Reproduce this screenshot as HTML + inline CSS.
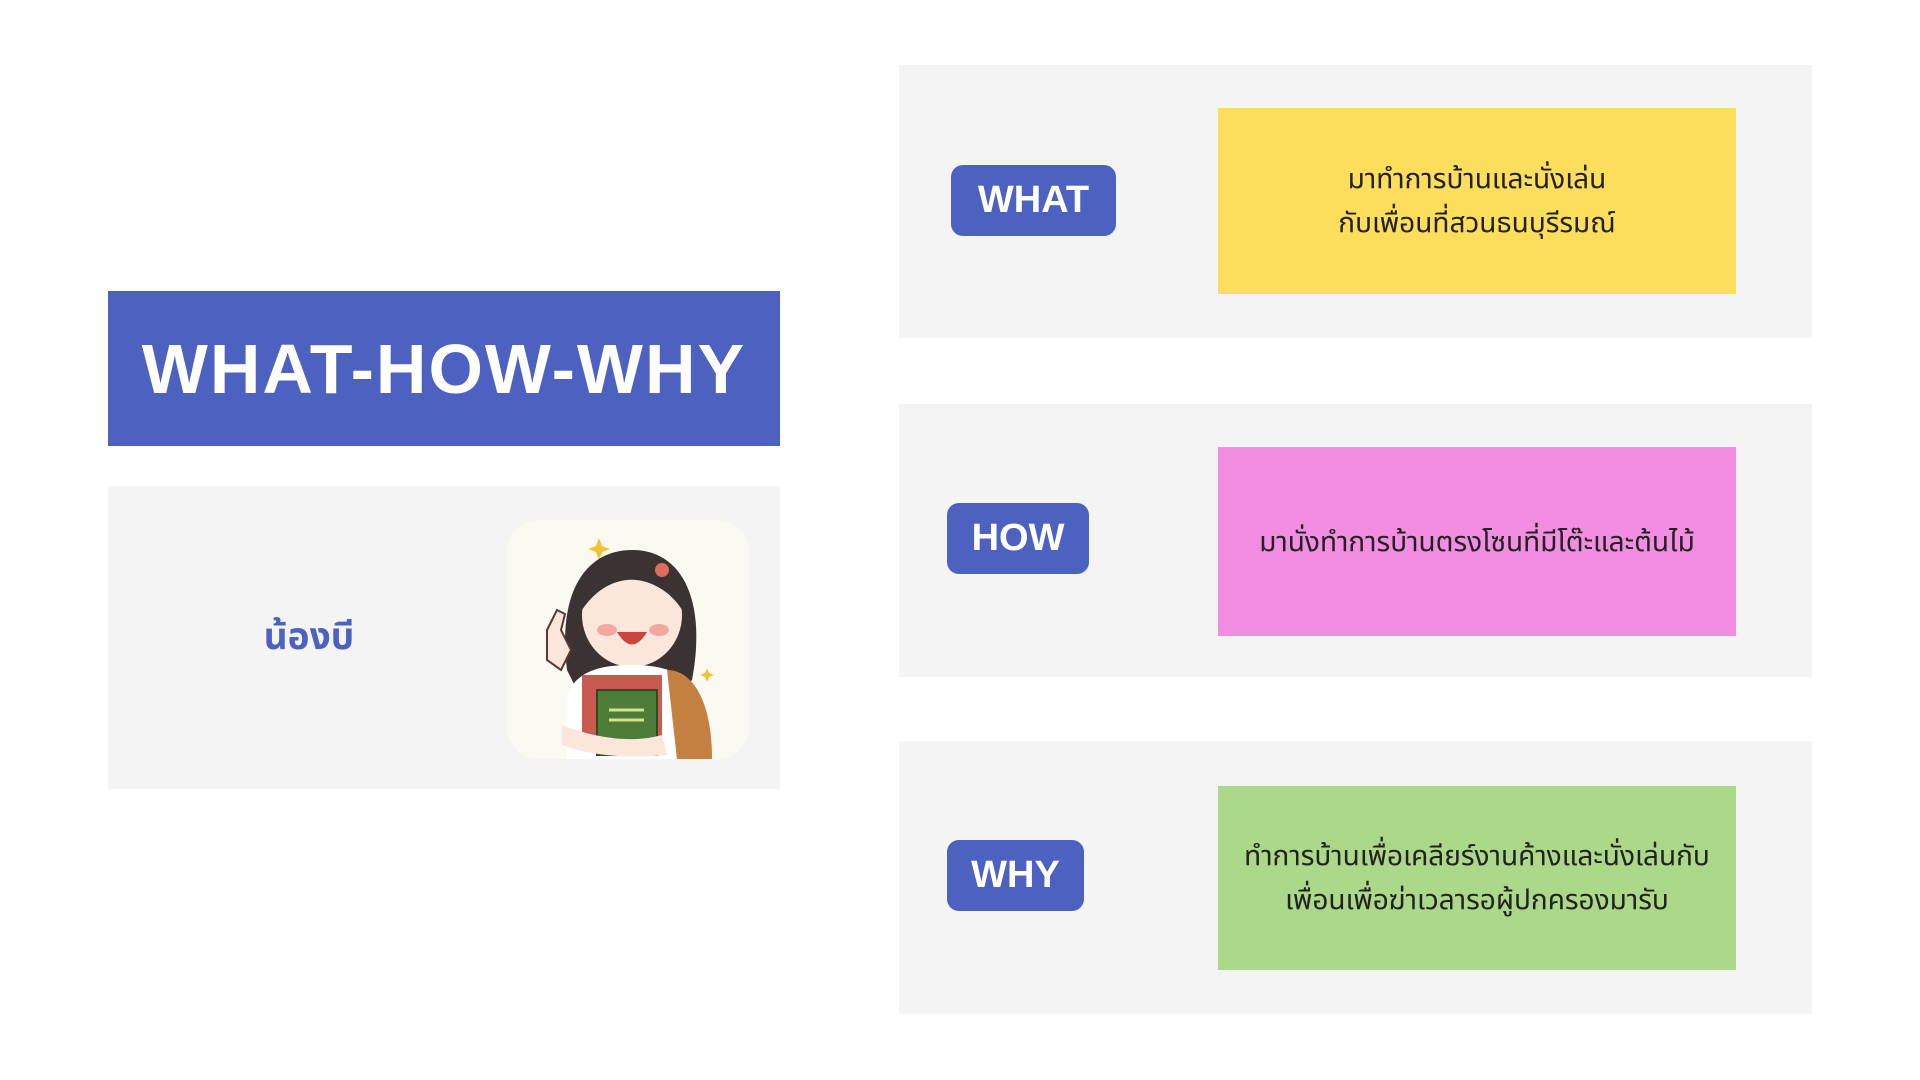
<!DOCTYPE html>
<html><head><meta charset="utf-8">
<style>
html,body{margin:0;padding:0;background:#fff;width:1920px;height:1080px;overflow:hidden;font-family:"Liberation Sans","Noto Sans Thai","Loma","Garuda",sans-serif;}
.abs{position:absolute;}
.title{left:108px;top:291px;width:672px;height:155px;background:#4c61c0;color:#fff;font-weight:bold;font-size:70px;display:flex;align-items:center;justify-content:center;letter-spacing:2px;}
.card{left:108px;top:486px;width:672px;height:303px;background:#f4f4f4;}
.name{left:200px;top:610px;width:218px;text-align:center;color:#4c61c0;font-weight:bold;font-size:37px;}
.img{left:507px;top:520px;width:242px;height:239px;border-radius:32px;background:#fafaf3;overflow:hidden;}
.panel{left:899px;width:913px;height:273px;background:#f4f4f4;}
.pill{background:#4c61c0;color:#fff;font-weight:bold;font-size:38px;border-radius:12px;display:flex;align-items:center;justify-content:center;}
.box{left:1218px;width:518px;display:flex;align-items:center;justify-content:center;text-align:center;font-size:28px;line-height:44px;color:#222;}
</style></head><body>
<div class="abs title">WHAT-HOW-WHY</div>
<div class="abs card"></div>
<div class="abs name">น้องบี</div>
<div class="abs img">
<svg width="242" height="239" viewBox="0 0 242 239">
 <path d="M92 18 l3 8 8 3 -8 3 -3 8 -3 -8 -8 -3 8 -3z" fill="#f2c230"/>
 <path d="M200 148 l2 5 5 2 -5 2 -2 5 -2 -5 -5 -2 5 -2z" fill="#f2c230"/>
 <path d="M60 150 C50 70 80 30 125 30 C175 30 200 80 185 160 L175 170 L70 170 Z" fill="#3a3331"/>
 <ellipse cx="125" cy="95" rx="50" ry="52" fill="#fbe6dc"/>
 <path d="M75 90 C80 50 110 40 130 42 C150 44 175 60 178 95 C165 70 140 58 120 60 C100 62 85 75 75 90Z" fill="#3a3331"/>
 <ellipse cx="100" cy="110" rx="10" ry="6" fill="#f4a7a0"/>
 <ellipse cx="152" cy="110" rx="10" ry="6" fill="#f4a7a0"/>
 <path d="M110 112 q15 25 30 0z" fill="#c8463e"/>
 <circle cx="155" cy="50" r="7" fill="#e06a5c"/>
 <path d="M40 110 l10 -20 8 4 -4 16 10 20 -10 20 -14 -10z" fill="#fbe6dc" stroke="#5a3a30" stroke-width="2"/>
 <path d="M60 175 C70 150 95 145 125 145 C160 145 185 155 190 180 L190 239 L60 239Z" fill="#fff"/>
 <path d="M160 150 C185 150 205 180 205 239 L170 239Z" fill="#c48040"/>
 <rect x="75" y="155" width="80" height="70" fill="#c95a50"/>
 <rect x="90" y="170" width="60" height="65" fill="#4e7d3a" stroke="#2e4a22" stroke-width="2"/>
 <path d="M102 190h35M102 200h35M110 222h25" stroke="#d8e08a" stroke-width="3"/>
 <path d="M55 205 C80 215 120 225 155 215 L160 235 C120 239 80 235 55 225Z" fill="#fbe6dc"/>
</svg>
</div>

<div class="abs panel" style="top:65px"></div>
<div class="abs panel" style="top:404px"></div>
<div class="abs panel" style="top:741px"></div>

<div class="abs pill" style="left:951px;top:165px;width:165px;height:71px">WHAT</div>
<div class="abs pill" style="left:947px;top:503px;width:142px;height:71px">HOW</div>
<div class="abs pill" style="left:947px;top:840px;width:137px;height:71px">WHY</div>

<div class="abs box" style="top:108px;height:186px;background:#fddd5c">มาทำการบ้านและนั่งเล่น<br>กับเพื่อนที่สวนธนบุรีรมณ์</div>
<div class="abs box" style="top:447px;height:189px;background:#f28de2">มานั่งทำการบ้านตรงโซนที่มีโต๊ะและต้นไม้</div>
<div class="abs box" style="top:786px;height:184px;background:#acd88a">ทำการบ้านเพื่อเคลียร์งานค้างและนั่งเล่นกับ<br>เพื่อนเพื่อฆ่าเวลารอผู้ปกครองมารับ</div>
</body></html>
